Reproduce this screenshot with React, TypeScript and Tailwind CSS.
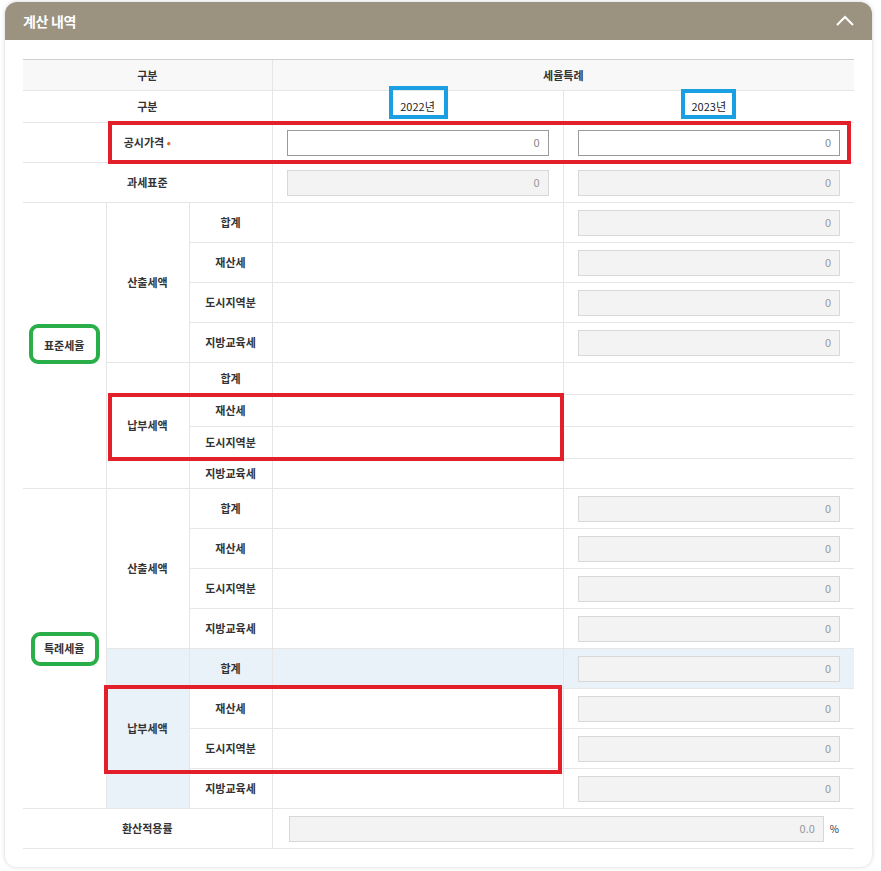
import React from 'react';

const font = { fontFamily: '"Noto Sans CJK KR", "Noto Sans", sans-serif' };

function Field({ value = '0', editable = false }: { value?: string; editable?: boolean }) {
  return (
    <div
      className={
        editable
          ? 'h-[26px] w-full border border-[#9a9a9a] bg-white flex items-center justify-end pr-[8px] text-[11px] text-[#888]'
          : 'h-[26px] w-full border border-[#d8d8d8] bg-[#f3f3f3] flex items-center justify-end pr-[8px] text-[11px] text-[#999]'
      }
    >
      {value}
    </div>
  );
}

const th = 'border-b border-[#e6e6e6] text-center text-[11px] font-bold text-[#333]';
const vl = 'border-l border-[#e6e6e6]';

function Rows({ title, second, blue }: { title: string; second: 'empty' | 'input'; blue?: boolean }) {
  const items = ['합계', '재산세', '도시지역분', '지방교육세'];
  const h2 = second === 'empty' ? ['h-[32px]', 'h-[32px]', 'h-[32px]', 'h-[30px]'] : ['h-[40px]', 'h-[40px]', 'h-[40px]', 'h-[40px]'];
  return (
    <>
      {items.map((it, i) => (
        <tr key={'a' + it} className="h-[40px]">
          {i === 0 && (
            <td rowSpan={8} className={th}>
              {title}
            </td>
          )}
          {i === 0 && (
            <td rowSpan={4} className={th + ' ' + vl}>
              산출세액
            </td>
          )}
          <td className={th + ' ' + vl}>{it}</td>
          <td className={'border-b border-[#e6e6e6] ' + vl}></td>
          <td className={'border-b border-[#e6e6e6] px-[14px] ' + vl}>
            <Field />
          </td>
        </tr>
      ))}
      {items.map((it, i) => {
        const hl = blue && i === 0 ? 'bg-[#e9f1f9]' : '';
        return (
          <tr key={'b' + it} className={h2[i] + ' ' + hl}>
            {i === 0 && (
              <td rowSpan={4} className={th + ' ' + vl + (blue ? ' bg-[#e9f1f9]' : '')}>
                납부세액
              </td>
            )}
            <td className={th + ' ' + vl}>{it}</td>
            <td className={'border-b border-[#e6e6e6] ' + vl}></td>
            <td className={'border-b border-[#e6e6e6] px-[14px] ' + vl}>{second === 'input' && <Field />}</td>
          </tr>
        );
      })}
    </>
  );
}

export default function App() {
  return (
    <div className="relative w-[881px] h-[871px] bg-white" style={font}>
      <div className="absolute left-[5px] top-[2px] w-[867px] h-[865px] rounded-[12px] bg-white shadow-[0_0_4px_rgba(0,0,0,0.18)] overflow-hidden">
        {/* Header */}
        <div className="h-[38px] bg-[#9b9280] flex items-center justify-between pl-[18px] pr-[18px]">
          <span className="text-white text-[14px] font-bold tracking-[-0.3px]">계산 내역</span>
          <svg width="18" height="11" viewBox="0 0 18 11" className="mt-[-1px]">
            <polyline points="1,10 9,2 17,10" fill="none" stroke="white" strokeWidth="2" />
          </svg>
        </div>

        <div className="px-[18px] pt-[19px]">
          <table className="w-[831px] table-fixed border-collapse">
            <colgroup>
              <col className="w-[83px]" />
              <col className="w-[83px]" />
              <col className="w-[83px]" />
              <col className="w-[291px]" />
              <col className="w-[291px]" />
            </colgroup>
            <tbody>
              <tr className="h-[31px] bg-[#f8f8f8]">
                <td colSpan={3} className={th + ' border-t border-t-[#cfcfcf]'}>
                  구분
                </td>
                <td colSpan={2} className={th + ' border-t border-t-[#cfcfcf] ' + vl}>
                  세율특례
                </td>
              </tr>
              <tr className="h-[32px]">
                <td colSpan={3} className={th}>
                  구분
                </td>
                <td className={'border-b border-[#e6e6e6] text-center text-[11px] text-[#222] ' + vl}>2022년</td>
                <td className={'border-b border-[#e6e6e6] text-center text-[11px] text-[#222] ' + vl}>2023년</td>
              </tr>
              <tr className="h-[40px]">
                <td colSpan={3} className={th}>
                  공시가격 <span className="text-[#e2661c]">•</span>
                </td>
                <td className={'border-b border-[#e6e6e6] px-[14px] ' + vl}>
                  <Field editable />
                </td>
                <td className={'border-b border-[#e6e6e6] px-[14px] ' + vl}>
                  <Field editable />
                </td>
              </tr>
              <tr className="h-[40px]">
                <td colSpan={3} className={th}>
                  과세표준
                </td>
                <td className={'border-b border-[#e6e6e6] px-[14px] ' + vl}>
                  <Field />
                </td>
                <td className={'border-b border-[#e6e6e6] px-[14px] ' + vl}>
                  <Field />
                </td>
              </tr>
              <Rows title="표준세율" second="empty" />
              <Rows title="특례세율" second="input" blue />
              <tr className="h-[40px]">
                <td colSpan={3} className={th}>
                  환산적용률
                </td>
                <td colSpan={2} className={'border-b border-[#e6e6e6] pl-[16px] pr-[15px] ' + vl}>
                  <div className="flex items-center gap-[6px]">
                    <Field value="0.0" />
                    <span className="text-[10px] text-[#333]">%</span>
                  </div>
                </td>
              </tr>
            </tbody>
          </table>
        </div>
      </div>

      {/* annotation marks */}
      <div className="absolute left-[108px] top-[121px] w-[743px] h-[43px] border-[4px] border-[#e3202a]" />
      <div className="absolute left-[389px] top-[86px] w-[59px] h-[33px] border-[4px] border-[#1aa0e2]" />
      <div className="absolute left-[681px] top-[89px] w-[55px] h-[30px] border-[4px] border-[#1aa0e2]" />
      <div className="absolute left-[29px] top-[324px] w-[71px] h-[40px] border-[4px] border-[#2aae4a] rounded-[9px]" />
      <div className="absolute left-[31px] top-[632px] w-[68px] h-[34px] border-[4px] border-[#2aae4a] rounded-[9px]" />
      <div className="absolute left-[108px] top-[393px] w-[456px] h-[68px] border-[4px] border-[#e3202a]" />
      <div className="absolute left-[104px] top-[685px] w-[458px] h-[89px] border-[4px] border-[#e3202a]" />
    </div>
  );
}
